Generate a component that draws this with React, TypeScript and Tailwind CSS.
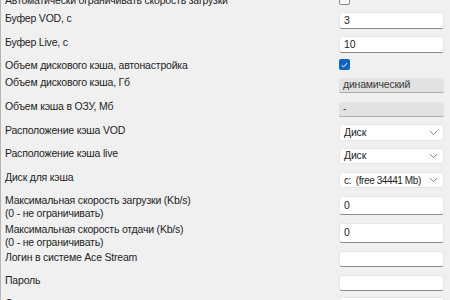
import React from "react";

const font = { fontFamily: '"Liberation Sans", Arial, sans-serif' };

function TextInput({ value, h }: { value?: string; h: string }) {
  return (
    <div
      className={`w-[105px] ${h} bg-white rounded-[3px] border border-[#e6e6e6] border-b-[#8c8c8c] flex items-center pl-[4px] text-[10.5px] tracking-[-0.2px] text-[#1e1e1e] whitespace-nowrap`}
    >
      {value}
    </div>
  );
}

function Disabled({ value, h }: { value: string; h: string }) {
  return (
    <div
      className={`w-[105px] ${h} bg-[#e2e2e2] rounded-[2px] border-b border-[#a8a8a8] flex items-center pl-[4px] text-[10.5px] tracking-[-0.2px] text-[#3a3a3a] whitespace-nowrap`}
    >
      {value}
    </div>
  );
}

function Select({ value, h, tight }: { value: string; h: string; tight?: boolean }) {
  return (
    <div
      className={`w-[105px] ${h} bg-white rounded-[3px] border border-[#e6e6e6] flex items-center justify-between pl-[4px] pr-[5px] text-[#1e1e1e] whitespace-nowrap ${
        tight ? "text-[10px] tracking-[-0.4px]" : "text-[10.5px] tracking-[-0.2px]"
      }`}
    >
      <span className="whitespace-pre">{value}</span>
      <svg width="9" height="6" viewBox="0 0 9 6" fill="none">
        <path d="M0.8 1 L4.5 4.6 L8.2 1" stroke="#6e6e6e" strokeWidth="0.9" />
      </svg>
    </div>
  );
}

function Checkbox({ checked }: { checked?: boolean }) {
  if (checked)
    return (
      <div className="w-[11px] h-[11px] rounded-[2px] bg-[#0a64c2] flex items-center justify-center">
        <svg width="7" height="6" viewBox="0 0 7 6" fill="none">
          <path d="M0.8 3.2 L2.6 4.9 L6.2 1" stroke="white" strokeWidth="1" />
        </svg>
      </div>
    );
  return <div className="w-[11px] h-[11px] rounded-[2px] border border-[#8a8a8a] bg-[#f7f7f7]" />;
}

type RowProps = {
  h: string;
  lt: string;
  ct?: string;
  label: React.ReactNode;
  children?: React.ReactNode;
};

function Row({ h, lt, ct = "mt-0", label, children }: RowProps) {
  return (
    <div className={`flex ${h}`}>
      <div className={`w-[338px] shrink-0 pl-[4px] ${lt} text-[10.5px] tracking-[-0.2px] leading-[13px] text-[#1e1e1e] whitespace-nowrap`}>
        {label}
      </div>
      <div className={ct}>{children}</div>
    </div>
  );
}

export default function App() {
  return (
    <div className="w-[450px] h-[300px] overflow-hidden bg-[#f0f0f0] border-l border-[#b4b4b4]" style={font}>
      <div className="-mt-[6px]">
        <Row h="h-[18px]" lt="mt-[0px]" label="Автоматически ограничивать скорость загрузки">
          <Checkbox />
        </Row>
        <Row h="h-[24px]" lt="mt-[0px]" label="Буфер VOD, с">
          <TextInput value="3" h="h-[17px]" />
        </Row>
        <Row h="h-[23px]" lt="mt-[0px]" label="Буфер Live, с">
          <TextInput value="10" h="h-[17px]" />
        </Row>
        <Row h="h-[19px]" lt="mt-[0px]" label="Объем дискового кэша, автонастройка">
          <Checkbox checked />
        </Row>
        <Row h="h-[24px]" lt="-mt-[2px]" label="Объем дискового кэша, Гб">
          <Disabled value="динамический" h="h-[15px]" />
        </Row>
        <Row h="h-[22px]" lt="-mt-[2px]" label="Объем кэша в ОЗУ, Мб">
          <Disabled value="-" h="h-[15px]" />
        </Row>
        <Row h="h-[24px]" lt="mt-[0px]" label="Расположение кэша VOD">
          <Select value="Диск" h="h-[17px]" />
        </Row>
        <Row h="h-[24px]" lt="-mt-[1px]" label="Расположение кэша live">
          <Select value="Диск" h="h-[16px]" />
        </Row>
        <Row h="h-[24px]" lt="-mt-[1px]" label="Диск для кэша">
          <Select value="c:  (free 34441 Mb)" h="h-[16px]" tight />
        </Row>
        <Row
          h="h-[27px]"
          lt="-mt-[2px]"
          label={
            <>
              Максимальная скорость загрузки (Kb/s)
              <br />
              (0 - не ограничивать)
            </>
          }
        >
          <TextInput value="0" h="h-[19px]" />
        </Row>
        <Row
          h="h-[28px]"
          lt="mt-[0px]"
          label={
            <>
              Максимальная скорость отдачи (Kb/s)
              <br />
              (0 - не ограничивать)
            </>
          }
        >
          <TextInput value="0" h="h-[20px]" />
        </Row>
        <Row h="h-[24px]" lt="mt-[0px]" label="Логин в системе Ace Stream">
          <TextInput h="h-[16px]" />
        </Row>
        <Row h="h-[22px]" lt="-mt-[1px]" label="Пароль">
          <TextInput h="h-[16px]" />
        </Row>
        <Row h="h-[20px]" lt="mt-[0px]" label="Сохранять пароль">
          <TextInput h="h-[16px]" />
        </Row>
      </div>
    </div>
  );
}
